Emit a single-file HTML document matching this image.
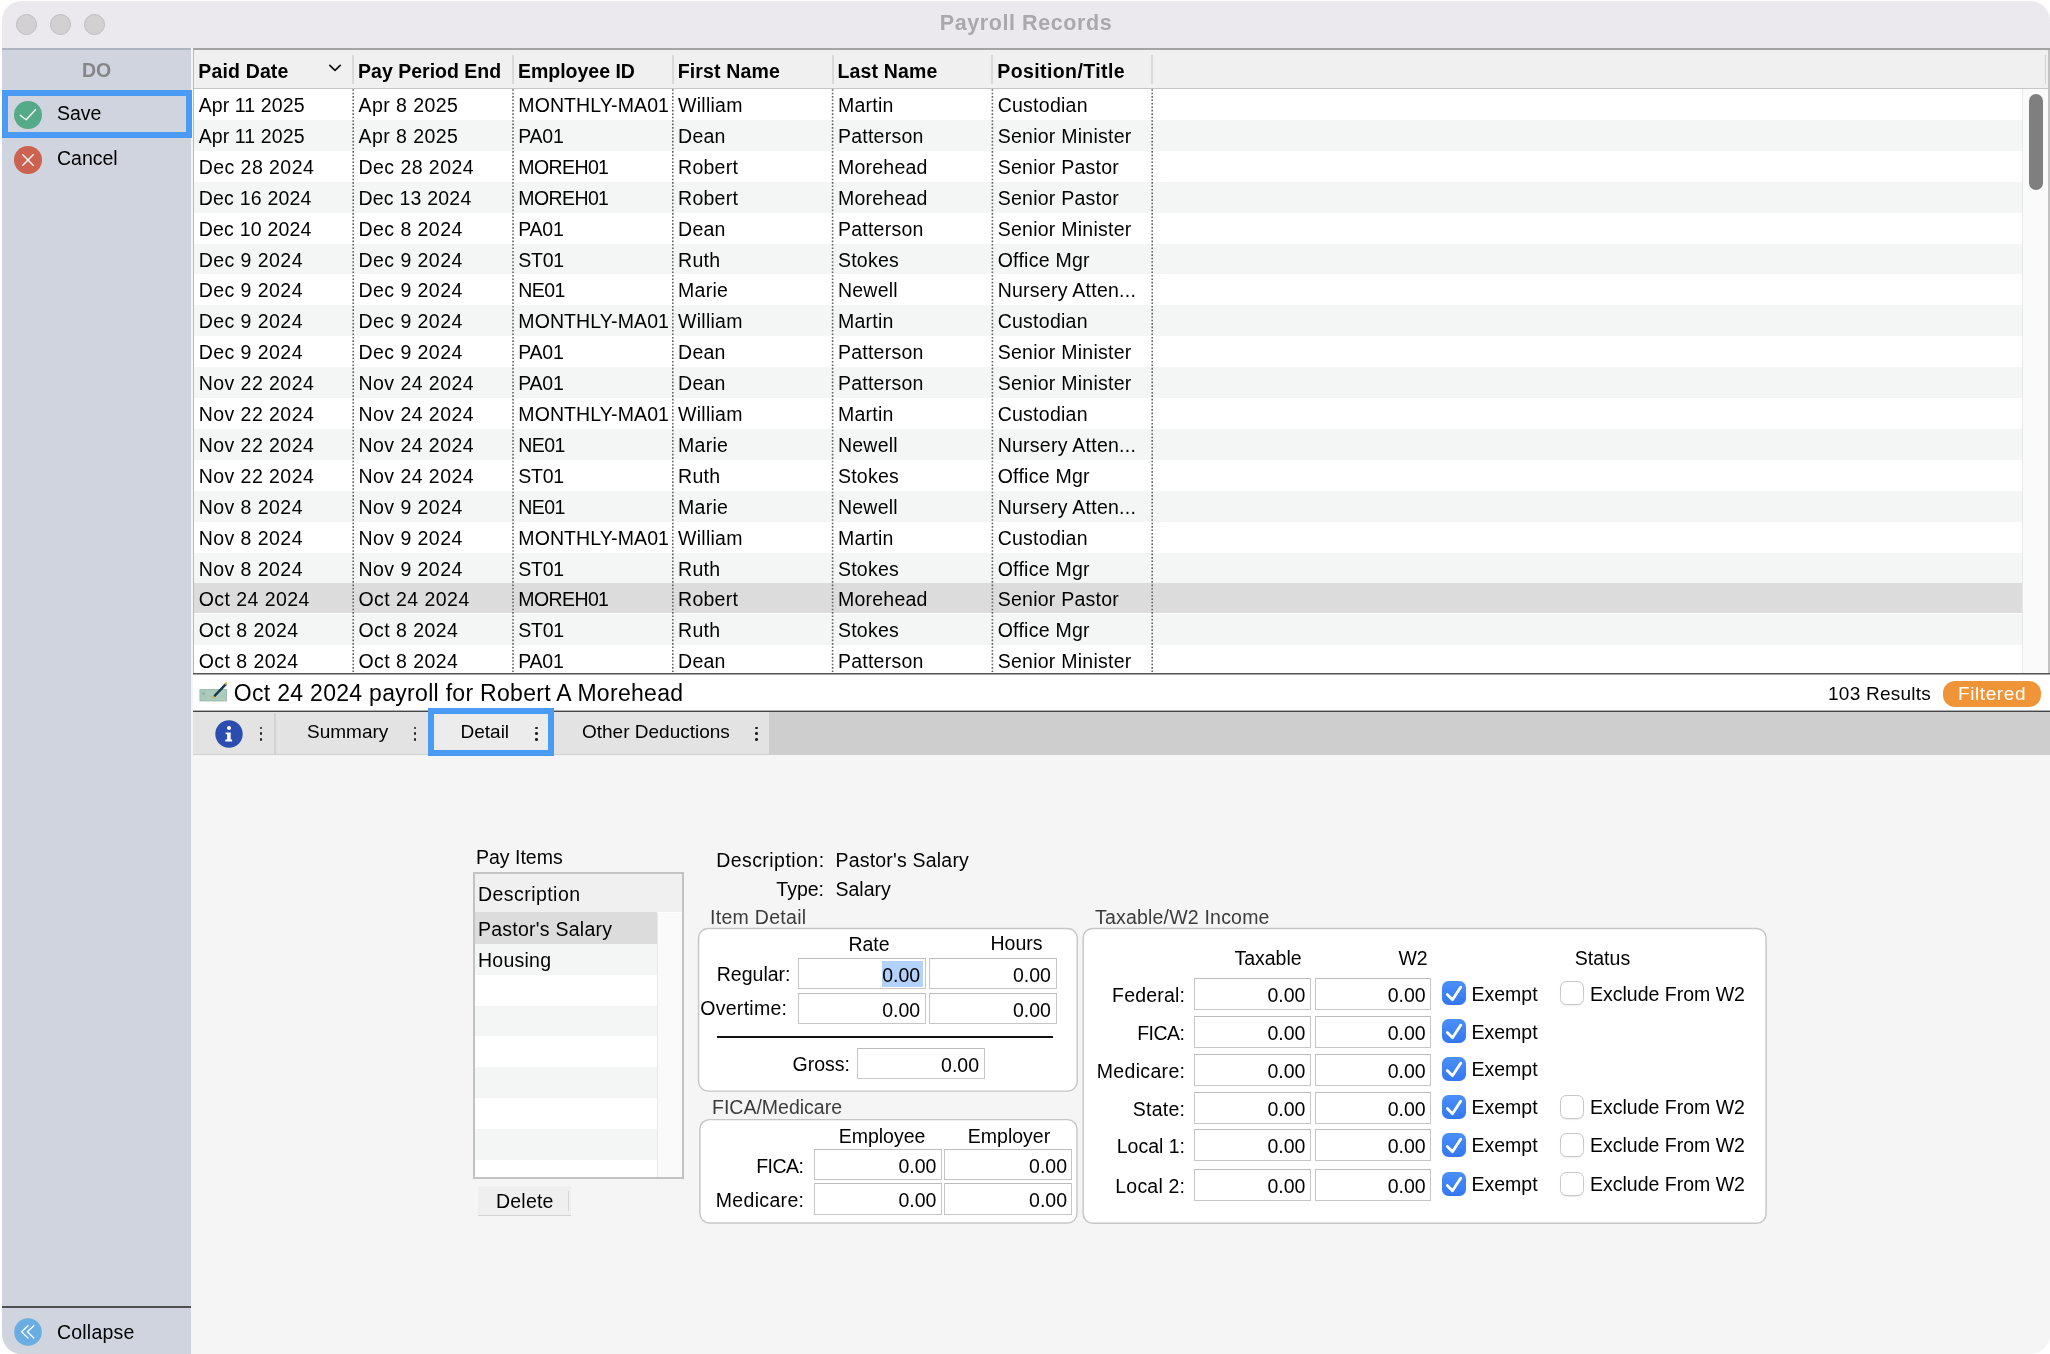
<!DOCTYPE html>
<html lang="en"><head><meta charset="utf-8"><title>Payroll Records</title>
<style>
*{box-sizing:border-box;margin:0;padding:0}
html,body{width:2050px;height:1354px;overflow:hidden;background:#fff}
body{font-family:"Liberation Sans",sans-serif;font-size:19.5px;color:#000;position:relative;letter-spacing:.25px}
.a{position:absolute;white-space:nowrap}
#win{will-change:transform;left:2px;top:1px;width:2048px;height:1353px;border-radius:20px;overflow:hidden;background:#f5f5f5}
#titlebar{left:0;top:0;width:2048px;height:47px;background:#ece9ee}
#tline{left:190.5px;top:47px;width:1858px;height:1.6px;background:#a3a3a4}
.tl{width:21px;height:21px;border-radius:50%;background:#d3d0d4;border:1px solid #bebbbf;top:12.5px}
#title{left:0;width:2048px;top:10px;text-align:center;font-weight:bold;font-size:21.5px;letter-spacing:.58px;color:#aaa8ac;line-height:24px}
#side{left:0;top:48px;width:189px;height:1306px;background:#d0d4de}
.t{line-height:24px;height:24px}
.row{left:192px;width:1828px;height:30.9px}
.cell{top:1px;line-height:30.9px;height:30.9px}
.dt{letter-spacing:.47px}
.hsep{width:2px;background:#d9d9d9;top:6px;height:29px}
.inp{background:#fff;border:1px solid #c6c6c6;border-top-color:#bcbcbc;height:31.4px;line-height:32px;text-align:right;padding-right:5px;letter-spacing:0}
.gl{color:#3c3c3c}
.cb{width:24px;height:24px;border-radius:6.5px}
.cb.on{background:linear-gradient(#4b90f8,#3376f0)}
.cb.off{background:#fff;border:1px solid #c9c9c9;box-shadow:0 .5px 1px rgba(0,0,0,.08)}
.dots{width:3px}
.dots i{position:absolute;left:-0.4px;width:2.5px;height:2.5px;border-radius:50%;background:#222}
</style></head><body>
<div id="win" class="a">
<div id="titlebar" class="a"></div><div id="tline" class="a"></div>
<div class="a tl" style="left:13.5px"></div><div class="a tl" style="left:47.5px"></div><div class="a tl" style="left:82px"></div>
<div id="title" class="a">Payroll Records</div>

<div id="side" class="a"><div class="a" style="left:0;top:-1px;width:189px;height:1.5px;background:#aeb5c0"></div>
<div class="a t" style="left:0;width:189px;text-align:center;top:9px;font-weight:bold;color:#868688;font-size:19.5px;letter-spacing:0">DO</div>
<div class="a" style="left:0;top:41.4px;width:190px;height:47.2px;border:6px solid #4a9bf4"></div>
<svg class="a" style="left:12px;top:51.5px" width="28" height="28" viewBox="0 0 28 28"><circle cx="14" cy="14" r="14" fill="#55aa88"/><path d="M6.2 14.3 L12.2 18.7 L21.6 8.5" fill="none" stroke="#fff" stroke-width="1.35" stroke-linecap="round" stroke-linejoin="round"/></svg>
<div class="a t" style="left:55px;top:52px;letter-spacing:0">Save</div>
<svg class="a" style="left:12px;top:97px" width="28" height="28" viewBox="0 0 28 28"><circle cx="14" cy="14" r="14" fill="#cd6251"/><path d="M8.8 8.8 L19.2 19.2 M19.2 8.8 L8.8 19.2" fill="none" stroke="#fff" stroke-width="1.35" stroke-linecap="round"/></svg>
<div class="a t" style="left:55px;top:97px;letter-spacing:0">Cancel</div>
<div class="a" style="left:0;top:1256.5px;width:189px;height:2px;background:#4e4f52"></div>
<svg class="a" style="left:12px;top:1269px" width="28" height="28" viewBox="0 0 28 28"><circle cx="14" cy="14" r="13.8" fill="#6aade2"/><path d="M14 7.7 L7.6 13.8 L14 20 M19.8 7.7 L13.4 13.8 L19.8 20" fill="none" stroke="#fff" stroke-width="1.25" stroke-linecap="round" stroke-linejoin="round"/></svg>
<div class="a t" style="left:55px;top:1271px;letter-spacing:.2px">Collapse</div>
</div>

<div class="a" style="left:191px;top:49px;width:1857px;height:623px;background:#fff"></div>
<div class="a" style="left:191px;top:49px;width:1.2px;height:623px;background:#b9b9b9"></div>
<div class="a" style="left:192px;top:49px;width:1854px;height:38px;background:#f0f0f0"></div>
<div class="a" style="left:192px;top:86.6px;width:1854px;height:1.8px;background:#c6c6c6"></div>
<div class="a t" style="left:196.3px;top:57.5px;font-weight:bold;letter-spacing:0.15px">Paid Date</div>
<div class="a hsep" style="left:350.2px;top:54px"></div>
<div class="a t" style="left:356.1px;top:57.5px;font-weight:bold;letter-spacing:0px">Pay Period End</div>
<div class="a hsep" style="left:510.0px;top:54px"></div>
<div class="a t" style="left:515.9px;top:57.5px;font-weight:bold;letter-spacing:0px">Employee ID</div>
<div class="a hsep" style="left:669.8px;top:54px"></div>
<div class="a t" style="left:675.7px;top:57.5px;font-weight:bold;letter-spacing:0.15px">First Name</div>
<div class="a hsep" style="left:829.6px;top:54px"></div>
<div class="a t" style="left:835.5px;top:57.5px;font-weight:bold;letter-spacing:0.15px">Last Name</div>
<div class="a hsep" style="left:989.4px;top:54px"></div>
<div class="a t" style="left:995.3px;top:57.5px;font-weight:bold;letter-spacing:0.4px">Position/Title</div>
<div class="a hsep" style="left:1149.2px;top:54px"></div>
<svg class="a" style="left:324px;top:61px" width="18" height="12" viewBox="0 0 18 12"><path d="M3.8 3.4 L9 8.4 L14.2 3.4" fill="none" stroke="#111" stroke-width="1.7" stroke-linecap="round" stroke-linejoin="round"/></svg>
<div class="a" style="left:2043px;top:54px;width:1px;height:29px;background:#d2d2d2"></div>
<div class="a row" style="top:88.0px;background:#fff;height:30.9px;overflow:hidden">
<span class="a cell" style="left:4.7px;letter-spacing:0.1px">Apr 11 2025</span>
<span class="a cell" style="left:164.5px;letter-spacing:0.45px">Apr 8 2025</span>
<span class="a cell" style="left:324.3px;letter-spacing:0.1px">MONTHLY-MA01</span>
<span class="a cell" style="left:484.1px">William</span>
<span class="a cell" style="left:643.9px">Martin</span>
<span class="a cell" style="left:803.7px">Custodian</span>
</div>
<div class="a row" style="top:118.9px;background:#f4f5f5;height:30.9px;overflow:hidden">
<span class="a cell" style="left:4.7px;letter-spacing:0.1px">Apr 11 2025</span>
<span class="a cell" style="left:164.5px;letter-spacing:0.45px">Apr 8 2025</span>
<span class="a cell" style="left:324.3px;letter-spacing:-0.25px">PA01</span>
<span class="a cell" style="left:484.1px">Dean</span>
<span class="a cell" style="left:643.9px">Patterson</span>
<span class="a cell" style="left:803.7px">Senior Minister</span>
</div>
<div class="a row" style="top:149.8px;background:#fff;height:30.9px;overflow:hidden">
<span class="a cell" style="left:4.7px;letter-spacing:0.45px">Dec 28 2024</span>
<span class="a cell" style="left:164.5px;letter-spacing:0.45px">Dec 28 2024</span>
<span class="a cell" style="left:324.3px;letter-spacing:-0.6px">MOREH01</span>
<span class="a cell" style="left:484.1px">Robert</span>
<span class="a cell" style="left:643.9px">Morehead</span>
<span class="a cell" style="left:803.7px">Senior Pastor</span>
</div>
<div class="a row" style="top:180.7px;background:#f4f5f5;height:30.9px;overflow:hidden">
<span class="a cell" style="left:4.7px;letter-spacing:0.22px">Dec 16 2024</span>
<span class="a cell" style="left:164.5px;letter-spacing:0.22px">Dec 13 2024</span>
<span class="a cell" style="left:324.3px;letter-spacing:-0.6px">MOREH01</span>
<span class="a cell" style="left:484.1px">Robert</span>
<span class="a cell" style="left:643.9px">Morehead</span>
<span class="a cell" style="left:803.7px">Senior Pastor</span>
</div>
<div class="a row" style="top:211.6px;background:#fff;height:30.9px;overflow:hidden">
<span class="a cell" style="left:4.7px;letter-spacing:0.22px">Dec 10 2024</span>
<span class="a cell" style="left:164.5px;letter-spacing:0.45px">Dec 8 2024</span>
<span class="a cell" style="left:324.3px;letter-spacing:-0.25px">PA01</span>
<span class="a cell" style="left:484.1px">Dean</span>
<span class="a cell" style="left:643.9px">Patterson</span>
<span class="a cell" style="left:803.7px">Senior Minister</span>
</div>
<div class="a row" style="top:242.5px;background:#f4f5f5;height:30.9px;overflow:hidden">
<span class="a cell" style="left:4.7px;letter-spacing:0.45px">Dec 9 2024</span>
<span class="a cell" style="left:164.5px;letter-spacing:0.45px">Dec 9 2024</span>
<span class="a cell" style="left:324.3px;letter-spacing:-0.25px">ST01</span>
<span class="a cell" style="left:484.1px">Ruth</span>
<span class="a cell" style="left:643.9px">Stokes</span>
<span class="a cell" style="left:803.7px">Office Mgr</span>
</div>
<div class="a row" style="top:273.4px;background:#fff;height:30.9px;overflow:hidden">
<span class="a cell" style="left:4.7px;letter-spacing:0.45px">Dec 9 2024</span>
<span class="a cell" style="left:164.5px;letter-spacing:0.45px">Dec 9 2024</span>
<span class="a cell" style="left:324.3px;letter-spacing:-0.6px">NE01</span>
<span class="a cell" style="left:484.1px">Marie</span>
<span class="a cell" style="left:643.9px">Newell</span>
<span class="a cell" style="left:803.7px">Nursery Atten...</span>
</div>
<div class="a row" style="top:304.3px;background:#f4f5f5;height:30.9px;overflow:hidden">
<span class="a cell" style="left:4.7px;letter-spacing:0.45px">Dec 9 2024</span>
<span class="a cell" style="left:164.5px;letter-spacing:0.45px">Dec 9 2024</span>
<span class="a cell" style="left:324.3px;letter-spacing:0.1px">MONTHLY-MA01</span>
<span class="a cell" style="left:484.1px">William</span>
<span class="a cell" style="left:643.9px">Martin</span>
<span class="a cell" style="left:803.7px">Custodian</span>
</div>
<div class="a row" style="top:335.2px;background:#fff;height:30.9px;overflow:hidden">
<span class="a cell" style="left:4.7px;letter-spacing:0.45px">Dec 9 2024</span>
<span class="a cell" style="left:164.5px;letter-spacing:0.45px">Dec 9 2024</span>
<span class="a cell" style="left:324.3px;letter-spacing:-0.25px">PA01</span>
<span class="a cell" style="left:484.1px">Dean</span>
<span class="a cell" style="left:643.9px">Patterson</span>
<span class="a cell" style="left:803.7px">Senior Minister</span>
</div>
<div class="a row" style="top:366.1px;background:#f4f5f5;height:30.9px;overflow:hidden">
<span class="a cell" style="left:4.7px;letter-spacing:0.45px">Nov 22 2024</span>
<span class="a cell" style="left:164.5px;letter-spacing:0.45px">Nov 24 2024</span>
<span class="a cell" style="left:324.3px;letter-spacing:-0.25px">PA01</span>
<span class="a cell" style="left:484.1px">Dean</span>
<span class="a cell" style="left:643.9px">Patterson</span>
<span class="a cell" style="left:803.7px">Senior Minister</span>
</div>
<div class="a row" style="top:397.0px;background:#fff;height:30.9px;overflow:hidden">
<span class="a cell" style="left:4.7px;letter-spacing:0.45px">Nov 22 2024</span>
<span class="a cell" style="left:164.5px;letter-spacing:0.45px">Nov 24 2024</span>
<span class="a cell" style="left:324.3px;letter-spacing:0.1px">MONTHLY-MA01</span>
<span class="a cell" style="left:484.1px">William</span>
<span class="a cell" style="left:643.9px">Martin</span>
<span class="a cell" style="left:803.7px">Custodian</span>
</div>
<div class="a row" style="top:427.9px;background:#f4f5f5;height:30.9px;overflow:hidden">
<span class="a cell" style="left:4.7px;letter-spacing:0.45px">Nov 22 2024</span>
<span class="a cell" style="left:164.5px;letter-spacing:0.45px">Nov 24 2024</span>
<span class="a cell" style="left:324.3px;letter-spacing:-0.6px">NE01</span>
<span class="a cell" style="left:484.1px">Marie</span>
<span class="a cell" style="left:643.9px">Newell</span>
<span class="a cell" style="left:803.7px">Nursery Atten...</span>
</div>
<div class="a row" style="top:458.8px;background:#fff;height:30.9px;overflow:hidden">
<span class="a cell" style="left:4.7px;letter-spacing:0.45px">Nov 22 2024</span>
<span class="a cell" style="left:164.5px;letter-spacing:0.45px">Nov 24 2024</span>
<span class="a cell" style="left:324.3px;letter-spacing:-0.25px">ST01</span>
<span class="a cell" style="left:484.1px">Ruth</span>
<span class="a cell" style="left:643.9px">Stokes</span>
<span class="a cell" style="left:803.7px">Office Mgr</span>
</div>
<div class="a row" style="top:489.7px;background:#f4f5f5;height:30.9px;overflow:hidden">
<span class="a cell" style="left:4.7px;letter-spacing:0.45px">Nov 8 2024</span>
<span class="a cell" style="left:164.5px;letter-spacing:0.45px">Nov 9 2024</span>
<span class="a cell" style="left:324.3px;letter-spacing:-0.6px">NE01</span>
<span class="a cell" style="left:484.1px">Marie</span>
<span class="a cell" style="left:643.9px">Newell</span>
<span class="a cell" style="left:803.7px">Nursery Atten...</span>
</div>
<div class="a row" style="top:520.6px;background:#fff;height:30.9px;overflow:hidden">
<span class="a cell" style="left:4.7px;letter-spacing:0.45px">Nov 8 2024</span>
<span class="a cell" style="left:164.5px;letter-spacing:0.45px">Nov 9 2024</span>
<span class="a cell" style="left:324.3px;letter-spacing:0.1px">MONTHLY-MA01</span>
<span class="a cell" style="left:484.1px">William</span>
<span class="a cell" style="left:643.9px">Martin</span>
<span class="a cell" style="left:803.7px">Custodian</span>
</div>
<div class="a row" style="top:551.5px;background:#f4f5f5;height:30.9px;overflow:hidden">
<span class="a cell" style="left:4.7px;letter-spacing:0.45px">Nov 8 2024</span>
<span class="a cell" style="left:164.5px;letter-spacing:0.45px">Nov 9 2024</span>
<span class="a cell" style="left:324.3px;letter-spacing:-0.25px">ST01</span>
<span class="a cell" style="left:484.1px">Ruth</span>
<span class="a cell" style="left:643.9px">Stokes</span>
<span class="a cell" style="left:803.7px">Office Mgr</span>
</div>
<div class="a row" style="top:582.4px;background:#fff;height:30.9px;overflow:hidden">
<div class="a" style="left:0;top:0;width:1828px;height:29.6px;background:#dcdcdc"></div>
<span class="a cell" style="left:4.7px;letter-spacing:0.45px">Oct 24 2024</span>
<span class="a cell" style="left:164.5px;letter-spacing:0.45px">Oct 24 2024</span>
<span class="a cell" style="left:324.3px;letter-spacing:-0.6px">MOREH01</span>
<span class="a cell" style="left:484.1px">Robert</span>
<span class="a cell" style="left:643.9px">Morehead</span>
<span class="a cell" style="left:803.7px">Senior Pastor</span>
</div>
<div class="a row" style="top:613.3px;background:#f4f5f5;height:30.9px;overflow:hidden">
<span class="a cell" style="left:4.7px;letter-spacing:0.45px">Oct 8 2024</span>
<span class="a cell" style="left:164.5px;letter-spacing:0.45px">Oct 8 2024</span>
<span class="a cell" style="left:324.3px;letter-spacing:-0.25px">ST01</span>
<span class="a cell" style="left:484.1px">Ruth</span>
<span class="a cell" style="left:643.9px">Stokes</span>
<span class="a cell" style="left:803.7px">Office Mgr</span>
</div>
<div class="a row" style="top:644.2px;background:#fff;height:26.8px;overflow:hidden">
<span class="a cell" style="left:4.7px;letter-spacing:0.45px">Oct 8 2024</span>
<span class="a cell" style="left:164.5px;letter-spacing:0.45px">Oct 8 2024</span>
<span class="a cell" style="left:324.3px;letter-spacing:-0.25px">PA01</span>
<span class="a cell" style="left:484.1px">Dean</span>
<span class="a cell" style="left:643.9px">Patterson</span>
<span class="a cell" style="left:803.7px">Senior Minister</span>
</div>
<svg class="a" style="left:0;top:88px" width="1200" height="583" viewBox="0 0 1200 583">
<line x1="351.2" x2="351.2" y1="0.2" y2="583" stroke="#626262" stroke-width="1.6" stroke-dasharray="1.6 1.84"/>
<line x1="511.0" x2="511.0" y1="0.2" y2="583" stroke="#626262" stroke-width="1.6" stroke-dasharray="1.6 1.84"/>
<line x1="670.8" x2="670.8" y1="0.2" y2="583" stroke="#626262" stroke-width="1.6" stroke-dasharray="1.6 1.84"/>
<line x1="830.6" x2="830.6" y1="0.2" y2="583" stroke="#626262" stroke-width="1.6" stroke-dasharray="1.6 1.84"/>
<line x1="990.4" x2="990.4" y1="0.2" y2="583" stroke="#626262" stroke-width="1.6" stroke-dasharray="1.6 1.84"/>
<line x1="1150.2" x2="1150.2" y1="0.2" y2="583" stroke="#626262" stroke-width="1.6" stroke-dasharray="1.6 1.84"/>
</svg>
<div class="a" style="left:2020.4px;top:88px;width:25.6px;height:584px;background:#fafafa;border-left:1.5px solid #e8e8e8"></div>
<div class="a" style="left:2026.9px;top:92.9px;width:14.2px;height:96px;border-radius:7.1px;background:#7f7f7f"></div>
<div class="a" style="left:2046px;top:49px;width:2px;height:623px;background:#c2c2c2"></div>
<div class="a" style="left:191px;top:673px;width:1857px;height:37px;background:#fff"></div>
<div class="a" style="left:191px;top:672px;width:1857px;height:2px;background:linear-gradient(#555 0,#555 50%,#a6a6a6 50%)"></div>
<div class="a" style="left:191px;top:709px;width:1857px;height:2px;background:linear-gradient(#b0b0b0 0,#b0b0b0 50%,#474747 50%)"></div>
<svg class="a" style="left:197px;top:681px" width="30" height="24" viewBox="0 0.6 30 24"><rect x="0.9" y="8" width="26.6" height="11.6" fill="#a9c9ba" stroke="#93b8a8" stroke-width="0.8"/><rect x="3.2" y="10.8" width="2.8" height="2.6" fill="#8fb5a4"/><path d="M7 11 L27 19 M7 19.3 L27 10" stroke="#b9d3c8" stroke-width="1.2" opacity=".55"/><path d="M14.3 14.2 L26 1.8 L28 3.4 L16 15.8 Z" fill="#173a4e"/><path d="M25.3 2.5 L27 0.4 L28.4 1.6 L27 3.6 Z" fill="#e2b233"/><path d="M12.2 17.2 L14.3 14.2 L16 15.8 Z" fill="#e0a820"/></svg>
<div class="a t" style="left:231.8px;top:678.5px;font-size:23px;letter-spacing:.3px;line-height:26px;height:26px" id="hdr">Oct 24 2024 payroll for Robert A Morehead</div>
<div class="a t" style="left:1826px;top:681px;font-size:19px">103 Results</div>
<div class="a" style="left:1941px;top:680px;width:98px;height:26px;border-radius:12px;background:#f09537;color:#fff;text-align:center;line-height:26px;font-size:19px;letter-spacing:.6px">Filtered</div>
<div class="a" style="left:191px;top:711px;width:1857px;height:43px;background:#cecece"></div>
<div class="a" style="left:191px;top:711px;width:576px;height:43px;background:#e3e3e3;border-bottom:1.5px solid #d0d0d0"></div>
<div class="a" style="left:272px;top:711.5px;width:1.5px;height:41px;background:#d2d2d2"></div>
<svg class="a" style="left:213px;top:719px" width="28" height="28" viewBox="0 0 28 28"><circle cx="14" cy="14" r="13.7" fill="#2b4db0"/><circle cx="14" cy="8.1" r="2" fill="#fff"/><path d="M10.6 12.5 H15.7 V19.6 H17.1 V21.6 H10.3 V19.6 H12.1 V14.3 H10.6 Z" fill="#fff"/></svg>
<div class="a dots" style="left:258px;top:725.9px;height:18px"><i style="top:0"></i><i style="top:5.6px"></i><i style="top:11.2px"></i></div>
<div class="a dots" style="left:412px;top:725.9px;height:18px"><i style="top:0"></i><i style="top:5.6px"></i><i style="top:11.2px"></i></div>
<div class="a dots" style="left:533.5px;top:725.9px;height:18px"><i style="top:0"></i><i style="top:5.6px"></i><i style="top:11.2px"></i></div>
<div class="a dots" style="left:753.5px;top:725.9px;height:18px"><i style="top:0"></i><i style="top:5.6px"></i><i style="top:11.2px"></i></div>
<div class="a t" style="left:305px;top:719px;font-size:19px;letter-spacing:0">Summary</div>
<div class="a" style="left:426px;top:706.5px;width:126px;height:48.3px;border:6px solid #4a9bf4;background:#ececec"></div>
<div class="a t" style="left:458.5px;top:719px;font-size:19px;letter-spacing:0">Detail</div>
<div class="a dots" style="left:533.5px;top:725.9px;height:18px"><i style="top:0"></i><i style="top:5.6px"></i><i style="top:11.2px"></i></div>
<div class="a t" style="left:580px;top:719px;font-size:19px;letter-spacing:0">Other Deductions</div>
<div class="a t" style="left:474px;top:844px;letter-spacing:0">Pay Items</div>
<div class="a" style="left:471px;top:871px;width:211px;height:307px;background:#fff;border:2px solid #c2c2c2"></div>
<div class="a" style="left:473px;top:873px;width:207px;height:38px;background:#f0f0f0"></div>
<div class="a t" style="left:476px;top:881px;letter-spacing:.45px">Description</div>
<div class="a" style="left:473px;top:910.6px;width:182px;height:32.1px;background:#dcdcdc"></div>
<div class="a" style="left:473px;top:942.7px;width:182px;height:30.9px;background:#f4f5f5"></div>
<div class="a" style="left:473px;top:973.6px;width:182px;height:30.9px;background:#fff"></div>
<div class="a" style="left:473px;top:1004.5px;width:182px;height:30.9px;background:#f4f5f5"></div>
<div class="a" style="left:473px;top:1035.4px;width:182px;height:30.9px;background:#fff"></div>
<div class="a" style="left:473px;top:1066.3px;width:182px;height:30.9px;background:#f4f5f5"></div>
<div class="a" style="left:473px;top:1097.2px;width:182px;height:30.9px;background:#fff"></div>
<div class="a" style="left:473px;top:1128.1px;width:182px;height:30.9px;background:#f4f5f5"></div>
<div class="a" style="left:473px;top:1159.0px;width:182px;height:17.0px;background:#fff"></div>
<div class="a" style="left:655px;top:912px;width:25px;height:264px;background:#fafafa;border-left:1px solid #e8e8e8"></div>
<div class="a t" style="left:476px;top:915.5px;letter-spacing:.25px">Pastor's Salary</div>
<div class="a t" style="left:476px;top:946.5px">Housing</div>
<div class="a" style="left:476px;top:1185.2px;width:92.7px;height:29.8px;background:#efefef;border-bottom:1.5px solid #d2d2d2;text-align:center;line-height:30px;padding-left:1px;letter-spacing:.2px">Delete</div>
<div class="a" style="left:566px;top:1190px;width:1.3px;height:20px;background:#d6d6d6"></div>
<div class="a t " style="right:1225.5px;top:847.0px;letter-spacing:0.45px">Description:</div>
<div class="a t " style="left:833.5px;top:847.0px;letter-spacing:0.2px">Pastor's Salary</div>
<div class="a t " style="right:1226.0px;top:876.0px;letter-spacing:0px">Type:</div>
<div class="a t " style="left:833.5px;top:876.0px;letter-spacing:0px">Salary</div>
<svg class="a" style="left:0;top:0" width="2048" height="1353" viewBox="0 0 2048 1353"><rect x="696.6" y="927.5" width="378.6" height="162.6" rx="9.5" fill="#fff" stroke="#c6c6c6" stroke-width="1.45"/><rect x="697.9" y="1118.6" width="377.1" height="103.4" rx="9.5" fill="#fff" stroke="#c6c6c6" stroke-width="1.45"/><rect x="1081.2" y="927.5" width="682.9" height="294.7" rx="9.5" fill="#fff" stroke="#c6c6c6" stroke-width="1.45"/></svg>
<div class="a t gl" style="left:708.0px;top:903.5px;letter-spacing:0.3px">Item Detail</div>
<div class="a t" style="left:767.0px;width:200px;text-align:center;top:930.5px;letter-spacing:0px">Rate</div>
<div class="a t" style="left:914.5px;width:200px;text-align:center;top:929.5px;letter-spacing:0px">Hours</div>
<div class="a t " style="right:1259.5px;top:961.0px;letter-spacing:0px">Regular:</div>
<div class="a t " style="right:1262.7px;top:995.0px;letter-spacing:0.28px">Overtime:</div>
<div class="a inp" style="left:796.1px;top:957.1px;width:128.1px;height:31.4px;line-height:32.4px;padding-right:5px"><span style="background:#b3d2fb;padding:2.8px 2.6px 1.4px 0;margin-right:-2.6px">0.00</span></div>
<div class="a inp" style="left:926.8px;top:957.1px;width:128.1px;height:31.4px;line-height:32.4px;padding-right:5px">0.00</div>
<div class="a inp" style="left:796.1px;top:991.5px;width:128.1px;height:31.4px;line-height:32.4px;padding-right:5px">0.00</div>
<div class="a inp" style="left:926.8px;top:991.5px;width:128.1px;height:31.4px;line-height:32.4px;padding-right:5px">0.00</div>
<div class="a" style="left:715px;top:1035px;width:336px;height:2px;background:#111"></div>
<div class="a t " style="right:1200.0px;top:1051.0px;letter-spacing:0px">Gross:</div>
<div class="a inp" style="left:854.9px;top:1046.8px;width:128.1px;height:31.4px;line-height:32.4px;padding-right:5px">0.00</div>
<div class="a t gl" style="left:710.0px;top:1094.0px;letter-spacing:0px">FICA/Medicare</div>
<div class="a t" style="left:780.0px;width:200px;text-align:center;top:1123.0px;letter-spacing:0px">Employee</div>
<div class="a t" style="left:907.0px;width:200px;text-align:center;top:1123.0px;letter-spacing:0px">Employer</div>
<div class="a t " style="right:1246.5px;top:1152.5px;letter-spacing:-0.5px">FICA:</div>
<div class="a t " style="right:1245.7px;top:1187.0px;letter-spacing:0.33px">Medicare:</div>
<div class="a inp" style="left:811.8px;top:1147.8px;width:128.1px;height:31.4px;line-height:32.4px;padding-right:4.5px">0.00</div>
<div class="a inp" style="left:942.4px;top:1147.8px;width:128.1px;height:31.4px;line-height:32.4px;padding-right:4.5px">0.00</div>
<div class="a inp" style="left:811.8px;top:1182.1px;width:128.1px;height:32px;line-height:33px;padding-right:4.5px">0.00</div>
<div class="a inp" style="left:942.4px;top:1182.1px;width:128.1px;height:32px;line-height:33px;padding-right:4.5px">0.00</div>
<div class="a t gl" style="left:1093.0px;top:903.5px;letter-spacing:0.2px">Taxable/W2 Income</div>
<div class="a t" style="left:1166.0px;width:200px;text-align:center;top:945.0px;letter-spacing:0px">Taxable</div>
<div class="a t" style="left:1311.0px;width:200px;text-align:center;top:945.0px;letter-spacing:0px">W2</div>
<div class="a t" style="left:1500.5px;width:200px;text-align:center;top:945.0px;letter-spacing:0px">Status</div>
<div class="a t " style="right:864.8px;top:982.0px;letter-spacing:0.2px">Federal:</div>
<div class="a inp" style="left:1192.2px;top:977.0px;width:117.0px;height:32px;line-height:33px;padding-right:4.8px">0.00</div>
<div class="a inp" style="left:1312.8px;top:977.0px;width:116.6px;height:32px;line-height:33px;padding-right:4.8px">0.00</div>
<div class="a cb on" style="left:1439.6px;top:980.3px"><svg width="24" height="24" viewBox="0 0 24 24" style="display:block"><path d="M5.3 13.4 L10.5 18.7 L18.8 6.1" fill="none" stroke="#fff" stroke-width="2.8" stroke-linecap="round" stroke-linejoin="round"/></svg></div>
<div class="a t " style="left:1469.5px;top:980.5px;letter-spacing:0px">Exempt</div>
<div class="a cb off" style="left:1558.2px;top:980.3px"></div>
<div class="a t " style="left:1588.0px;top:980.5px;letter-spacing:0px">Exclude From W2</div>
<div class="a t " style="right:865.5px;top:1020.1px;letter-spacing:-0.5px">FICA:</div>
<div class="a inp" style="left:1192.2px;top:1015.1px;width:117.0px;height:32px;line-height:33px;padding-right:4.8px">0.00</div>
<div class="a inp" style="left:1312.8px;top:1015.1px;width:116.6px;height:32px;line-height:33px;padding-right:4.8px">0.00</div>
<div class="a cb on" style="left:1439.6px;top:1018.4px"><svg width="24" height="24" viewBox="0 0 24 24" style="display:block"><path d="M5.3 13.4 L10.5 18.7 L18.8 6.1" fill="none" stroke="#fff" stroke-width="2.8" stroke-linecap="round" stroke-linejoin="round"/></svg></div>
<div class="a t " style="left:1469.5px;top:1018.6px;letter-spacing:0px">Exempt</div>
<div class="a t " style="right:864.7px;top:1057.7px;letter-spacing:0.33px">Medicare:</div>
<div class="a inp" style="left:1192.2px;top:1052.7px;width:117.0px;height:32px;line-height:33px;padding-right:4.8px">0.00</div>
<div class="a inp" style="left:1312.8px;top:1052.7px;width:116.6px;height:32px;line-height:33px;padding-right:4.8px">0.00</div>
<div class="a cb on" style="left:1439.6px;top:1056.0px"><svg width="24" height="24" viewBox="0 0 24 24" style="display:block"><path d="M5.3 13.4 L10.5 18.7 L18.8 6.1" fill="none" stroke="#fff" stroke-width="2.8" stroke-linecap="round" stroke-linejoin="round"/></svg></div>
<div class="a t " style="left:1469.5px;top:1056.2px;letter-spacing:0px">Exempt</div>
<div class="a t " style="right:864.8px;top:1095.5px;letter-spacing:0.25px">State:</div>
<div class="a inp" style="left:1192.2px;top:1090.5px;width:117.0px;height:32px;line-height:33px;padding-right:4.8px">0.00</div>
<div class="a inp" style="left:1312.8px;top:1090.5px;width:116.6px;height:32px;line-height:33px;padding-right:4.8px">0.00</div>
<div class="a cb on" style="left:1439.6px;top:1093.8px"><svg width="24" height="24" viewBox="0 0 24 24" style="display:block"><path d="M5.3 13.4 L10.5 18.7 L18.8 6.1" fill="none" stroke="#fff" stroke-width="2.8" stroke-linecap="round" stroke-linejoin="round"/></svg></div>
<div class="a t " style="left:1469.5px;top:1094.0px;letter-spacing:0px">Exempt</div>
<div class="a cb off" style="left:1558.2px;top:1093.8px"></div>
<div class="a t " style="left:1588.0px;top:1094.0px;letter-spacing:0px">Exclude From W2</div>
<div class="a t " style="right:865.0px;top:1133.2px;letter-spacing:0px">Local 1:</div>
<div class="a inp" style="left:1192.2px;top:1128.2px;width:117.0px;height:32px;line-height:33px;padding-right:4.8px">0.00</div>
<div class="a inp" style="left:1312.8px;top:1128.2px;width:116.6px;height:32px;line-height:33px;padding-right:4.8px">0.00</div>
<div class="a cb on" style="left:1439.6px;top:1131.5px"><svg width="24" height="24" viewBox="0 0 24 24" style="display:block"><path d="M5.3 13.4 L10.5 18.7 L18.8 6.1" fill="none" stroke="#fff" stroke-width="2.8" stroke-linecap="round" stroke-linejoin="round"/></svg></div>
<div class="a t " style="left:1469.5px;top:1131.7px;letter-spacing:0px">Exempt</div>
<div class="a cb off" style="left:1558.2px;top:1131.5px"></div>
<div class="a t " style="left:1588.0px;top:1131.7px;letter-spacing:0px">Exclude From W2</div>
<div class="a t " style="right:864.8px;top:1172.9px;letter-spacing:0.2px">Local 2:</div>
<div class="a inp" style="left:1192.2px;top:1167.9px;width:117.0px;height:32px;line-height:33px;padding-right:4.8px">0.00</div>
<div class="a inp" style="left:1312.8px;top:1167.9px;width:116.6px;height:32px;line-height:33px;padding-right:4.8px">0.00</div>
<div class="a cb on" style="left:1439.6px;top:1171.2px"><svg width="24" height="24" viewBox="0 0 24 24" style="display:block"><path d="M5.3 13.4 L10.5 18.7 L18.8 6.1" fill="none" stroke="#fff" stroke-width="2.8" stroke-linecap="round" stroke-linejoin="round"/></svg></div>
<div class="a t " style="left:1469.5px;top:1171.4px;letter-spacing:0px">Exempt</div>
<div class="a cb off" style="left:1558.2px;top:1171.2px"></div>
<div class="a t " style="left:1588.0px;top:1171.4px;letter-spacing:0px">Exclude From W2</div>
</div></body></html>
